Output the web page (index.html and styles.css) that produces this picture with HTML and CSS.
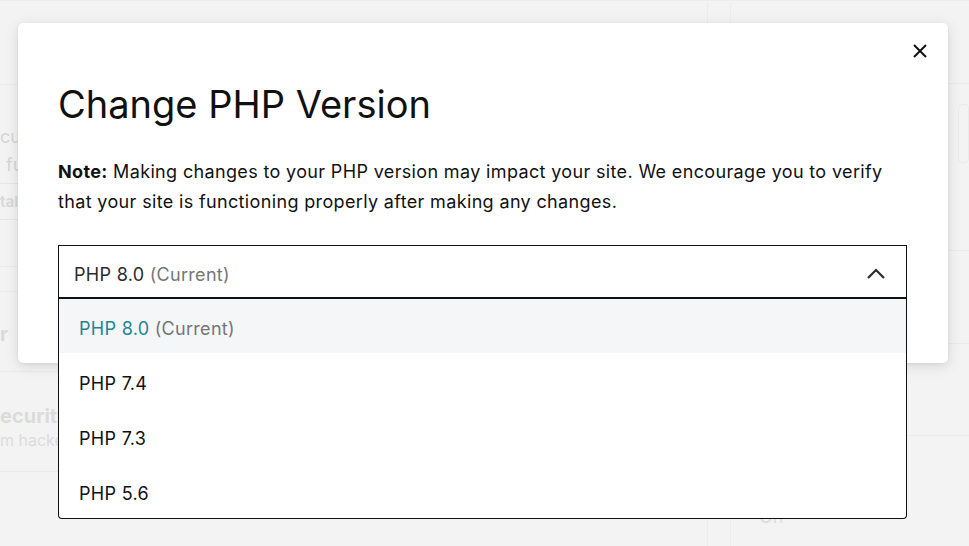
FILE: index.html
```html
<!DOCTYPE html>
<html lang="en">
<head>
<meta charset="utf-8">
<title>Change PHP Version</title>
<link rel="stylesheet" href="styles.css">
</head>
<body>
<div class="bg">
  <div class="bg-left">
    <div class="bg-head"></div>
    <div class="bg-sec bg-sec-a">
      <div class="bg-t1">cu</div>
      <div class="bg-t2">fu</div>
      <div class="bg-btn">tal</div>
    </div>
    <div class="bg-sec bg-sec-b"></div>
    <div class="bg-sec bg-sec-c">
      <div class="bg-bold">r</div>
    </div>
    <div class="bg-sec bg-sec-d">
      <div class="bg-bold2">ecurity</div>
      <div class="bg-t3">m hacke</div>
    </div>
  </div>
  <div class="bg-right">
    <div class="bg-rhead"></div>
    <div class="bg-rsec bg-rsec-a"><div class="bg-rbox"></div></div>
    <div class="bg-rsec bg-rsec-b"></div>
    <div class="bg-rsec bg-rsec-c"></div>
    <div class="bg-rsec bg-rsec-d"><div class="bg-on">On</div></div>
  </div>
</div>

<div class="modal" role="dialog" aria-labelledby="mtitle">
  <button class="close" aria-label="Close">
    <svg width="14" height="14" viewBox="0 0 14 14"><path d="M1 1L13 13M13 1L1 13" stroke="#111" stroke-width="2" fill="none"/></svg>
  </button>
  <h1 id="mtitle" class="title">Change PHP Version</h1>
  <p class="note"><strong>Note:</strong> Making changes to your PHP version may impact your site. We encourage you to verify that your site is functioning properly after making any changes.</p>
  <div class="select-wrap">
    <div class="select">
      <span class="val">PHP 8.0 <span class="muted">(Current)</span></span>
      <svg class="chev" width="20" height="12" viewBox="0 0 20 12"><path d="M2 10L10 2L18 10" stroke="#2b2b2b" stroke-width="2.2" fill="none"/></svg>
    </div>
    <ul class="menu">
      <li class="opt active"><span>PHP 8.0 <span class="muted">(Current)</span></span></li>
      <li class="opt"><span>PHP 7.4</span></li>
      <li class="opt"><span>PHP 7.3</span></li>
      <li class="opt"><span>PHP 5.6</span></li>
    </ul>
  </div>
</div>
</body>
</html>
```

FILE: styles.css
```css
html, body {
  margin: 0;
  padding: 0;
  height: 100%;
}
body {
  background: #f3f3f3;
  font-family: Inter, "Noto Sans", "Liberation Sans", sans-serif;
  overflow: hidden;
  position: relative;
}

/* faint background page */
.bg {
  display: flex;
  gap: 22px;
  padding-top: 2px;
  border-top: 1px solid #ededed;
  height: 100%;
  box-sizing: border-box;
}
.bg-left {
  width: 707px;
  border-right: 1px solid #ececec;
  color: #d6d6d6;
}
.bg-head {
  height: 81px;
  border-bottom: 1px solid #ebebeb;
}
.bg-sec {
  border-bottom: 1px solid #ebebeb;
  box-sizing: border-box;
}
.bg-sec-a {
  height: 182px;
  padding-top: 38px;
  font-size: 18px;
}
.bg-t1 { height: 28px; line-height: 28px; white-space: nowrap; }
.bg-t2 { height: 28px; line-height: 28px; white-space: nowrap; margin-left: 6px; }
.bg-btn {
  margin-top: 4px;
  height: 35px;
  border-top: 1px solid #e6e6e6;
  border-bottom: 1px solid #e6e6e6;
  line-height: 35px;
  font-size: 15px;
  font-weight: 700;
  color: #dadada;
}
.bg-sec-b { height: 25px; }
.bg-sec-c {
  height: 80px;
  padding-top: 30px;
}
.bg-bold { font-weight: 700; font-size: 20px; color: #d9d9d9; }
.bg-sec-d {
  height: 100px;
  padding-top: 32px;
}
.bg-bold2 { font-weight: 700; font-size: 20px; color: #dbdbdb; }
.bg-t3 { font-size: 16px; color: #dcdcdc; margin-top: 2px; }

.bg-right {
  flex: 1;
  border-left: 1px solid #ececec;
  border-top-left-radius: 4px;
}
.bg-rhead {
  height: 80px;
  border-bottom: 1px solid #ebebeb;
}
.bg-rsec {
  border-bottom: 1px solid #ebebeb;
  box-sizing: border-box;
}
.bg-rsec-a {
  height: 167px;
  padding: 20px 0 0 227px;
}
.bg-rbox {
  height: 57px;
  border: 1px solid #ebebeb;
  border-radius: 4px;
}
.bg-rsec-b { height: 93px; }
.bg-rsec-c { height: 92px; }
.bg-rsec-d { height: 120px; padding: 70px 0 0 28px; border-bottom: 0; }
.bg-on { color: #dcdcdc; font-size: 18px; }

/* modal */
.modal {
  position: absolute;
  left: 18px;
  top: 23px;
  width: 930px;
  height: 340px;
  box-sizing: border-box;
  padding: 58px 41px 0 40px;
  background: #fff;
  border-radius: 5px;
  box-shadow: 0 3px 14px rgba(0, 0, 0, 0.12), 0 1px 3px rgba(0, 0, 0, 0.06);
}
.close {
  position: absolute;
  top: 21px;
  right: 21px;
  width: 14px;
  height: 14px;
  padding: 0;
  border: 0;
  background: none;
  display: flex;
}
.title {
  margin: 0;
  font-size: 38px;
  line-height: 46px;
  font-weight: 400;
  color: #111;
  letter-spacing: 0;
}
.note {
  margin: 30px 0 0;
  font-size: 18px;
  line-height: 30px;
  color: #111;
  letter-spacing: 0.35px;
}
.note strong { font-weight: 700; }

.select-wrap {
  margin-top: 28px;
  position: relative;
}
.select {
  height: 54px;
  box-sizing: border-box;
  border: 1px solid #111;
  border-bottom-width: 2px;
  display: flex;
  align-items: center;
  justify-content: space-between;
  padding: 6px 20px 0 15px;
  font-size: 18px;
  letter-spacing: 0.3px;
  color: #2b2b2b;
}
.muted { color: #767676; }
.chev { display: block; margin-top: -2px; }

.menu {
  position: absolute;
  left: 0;
  right: 0;
  top: 54px;
  margin: 0;
  padding: 0;
  list-style: none;
  background: #fff;
  border: 1px solid #111;
  border-top: 0;
  border-radius: 0 0 4px 4px;
  overflow: hidden;
  z-index: 2;
}
.opt {
  height: 55px;
  box-sizing: border-box;
  display: flex;
  align-items: center;
  padding: 5px 0 0 20px;
  font-size: 18px;
  letter-spacing: 0.3px;
  color: #111;
}
.opt.active {
  background: #f5f6f8;
  color: #1b8796;
  height: 54px;
  padding-top: 4px;
}
```
